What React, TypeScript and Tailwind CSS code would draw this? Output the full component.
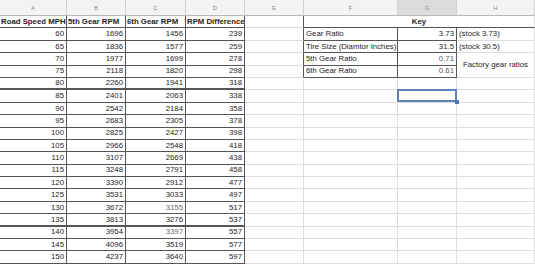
import React from "react";

const data: [number, number, number, number][] = [
  [60, 1696, 1456, 239],
  [65, 1836, 1577, 259],
  [70, 1977, 1699, 278],
  [75, 2118, 1820, 298],
  [80, 2260, 1941, 318],
  [85, 2401, 2063, 338],
  [90, 2542, 2184, 358],
  [95, 2683, 2305, 378],
  [100, 2825, 2427, 398],
  [105, 2966, 2548, 418],
  [110, 3107, 2669, 438],
  [115, 3248, 2791, 458],
  [120, 3390, 2912, 477],
  [125, 3531, 3033, 497],
  [130, 3672, 3155, 517],
  [135, 3813, 3276, 537],
  [140, 3954, 3397, 557],
  [145, 4096, 3519, 577],
  [150, 4237, 3640, 597],
];

const dark = "border-r border-b border-r-[#555] border-b-[#555]";
const light = "border-r border-b border-r-[#dcdcdc] border-b-[#dcdcdc]";

export default function App() {
  const cells: React.ReactNode[] = [];
  const letters = ["A", "B", "C", "D", "E", "F", "G", "H"];
  letters.forEach((l) => {
    cells.push(
      <div
        key={"h" + l}
        className={`flex items-center justify-center border-r border-b border-r-[#d0d0d0] border-b-[#b8b8b8] text-[6px] text-[#888] ${
          l === "G" ? "bg-[#dcdcdc]" : "bg-[#f3f3f3]"
        }`}
      >
        {l}
      </div>
    );
  });

  ["Road Speed MPH", "5th Gear RPM", "6th Gear RPM", "RPM Difference"].forEach((t, i) => {
    cells.push(
      <div key={"t" + i} className={`flex items-center pl-[1px] font-bold whitespace-nowrap overflow-hidden ${dark}`}>
        {t}
      </div>
    );
  });
  cells.push(<div key="r1e" className="border-r border-b border-r-[#555] border-b-[#dcdcdc]" />);
  cells.push(
    <div key="key" className="col-span-3 flex items-center justify-center font-bold border-b border-r border-b-[#555] border-r-[#dcdcdc]">
      Key
    </div>
  );

  const keyRows: [string, string, string | null, boolean][] = [
    ["Gear Ratio", "3.73", "(stock 3.73)", false],
    ["Tire Size (Diamtor Inches)", "31.5", "(stock 30.5)", false],
    ["5th Gear Ratio", "0.71", "Factory gear ratios", true],
    ["6th Gear Ratio", "0.61", null, true],
  ];

  data.forEach((row, ri) => {
    const r = ri + 2;
    const thick = r === 6 || r === 17 ? "border-b-2" : "";
    row.forEach((v, ci) => {
      const faded = ci === 2 && (v === 3155 || v === 3397);
      cells.push(
        <div
          key={`d${r}-${ci}`}
          className={`flex items-center justify-end pr-[2px] ${dark} ${thick} ${faded ? "text-[#6a6a6a]" : ""}`}
        >
          {v}
        </div>
      );
    });
    if (r <= 5) {
      const k = keyRows[r - 2];
      cells.push(<div key={`e${r}`} className="border-r border-b border-r-[#555] border-b-[#dcdcdc]" />);
      cells.push(
        <div key={`f${r}`} className={`flex items-center pl-[2px] whitespace-nowrap overflow-hidden ${dark}`}>
          {k[0]}
        </div>
      );
      cells.push(
        <div key={`g${r}`} className={`flex items-center justify-end pr-[2px] ${dark} ${k[3] ? "text-[#5a5a5a]" : ""}`}>
          {k[1]}
        </div>
      );
      if (r === 4) {
        cells.push(
          <div key={`h${r}`} className={`row-span-2 flex items-center justify-center whitespace-nowrap ${light}`}>
            {k[2]}
          </div>
        );
      } else if (r < 4) {
        cells.push(
          <div key={`h${r}`} className={`flex items-center pl-[2px] whitespace-nowrap ${light}`}>
            {k[2]}
          </div>
        );
      }
    } else {
      cells.push(<div key={`e${r}`} className={light} />);
      cells.push(<div key={`f${r}`} className={light} />);
      if (r === 7) {
        cells.push(
          <div key={`g${r}`} className="relative border-b border-b-[#dcdcdc]">
            <div className="absolute -left-[1px] -top-[1px] right-0 bottom-0 border-2 border-[#5b82bd]" />
            <div className="absolute -right-[2px] -bottom-[2px] h-[4px] w-[4px] bg-[#4a74b4]" />
          </div>
        );
      } else {
        cells.push(<div key={`g${r}`} className={light} />);
      }
      cells.push(<div key={`h${r}`} className={light} />);
    }
  });

  return (
    <div
      className="h-[266px] w-[535px] overflow-hidden bg-white text-[7.8px] leading-none text-[#1e1e1e]"
      style={{ fontFamily: '"Liberation Sans", Arial, sans-serif' }}
    >
      <div className="grid grid-cols-[67px_59px_60px_59px_59px_94px_59px_78px] grid-rows-[16px_repeat(20,12.4px)]">
        {cells}
      </div>
    </div>
  );
}
